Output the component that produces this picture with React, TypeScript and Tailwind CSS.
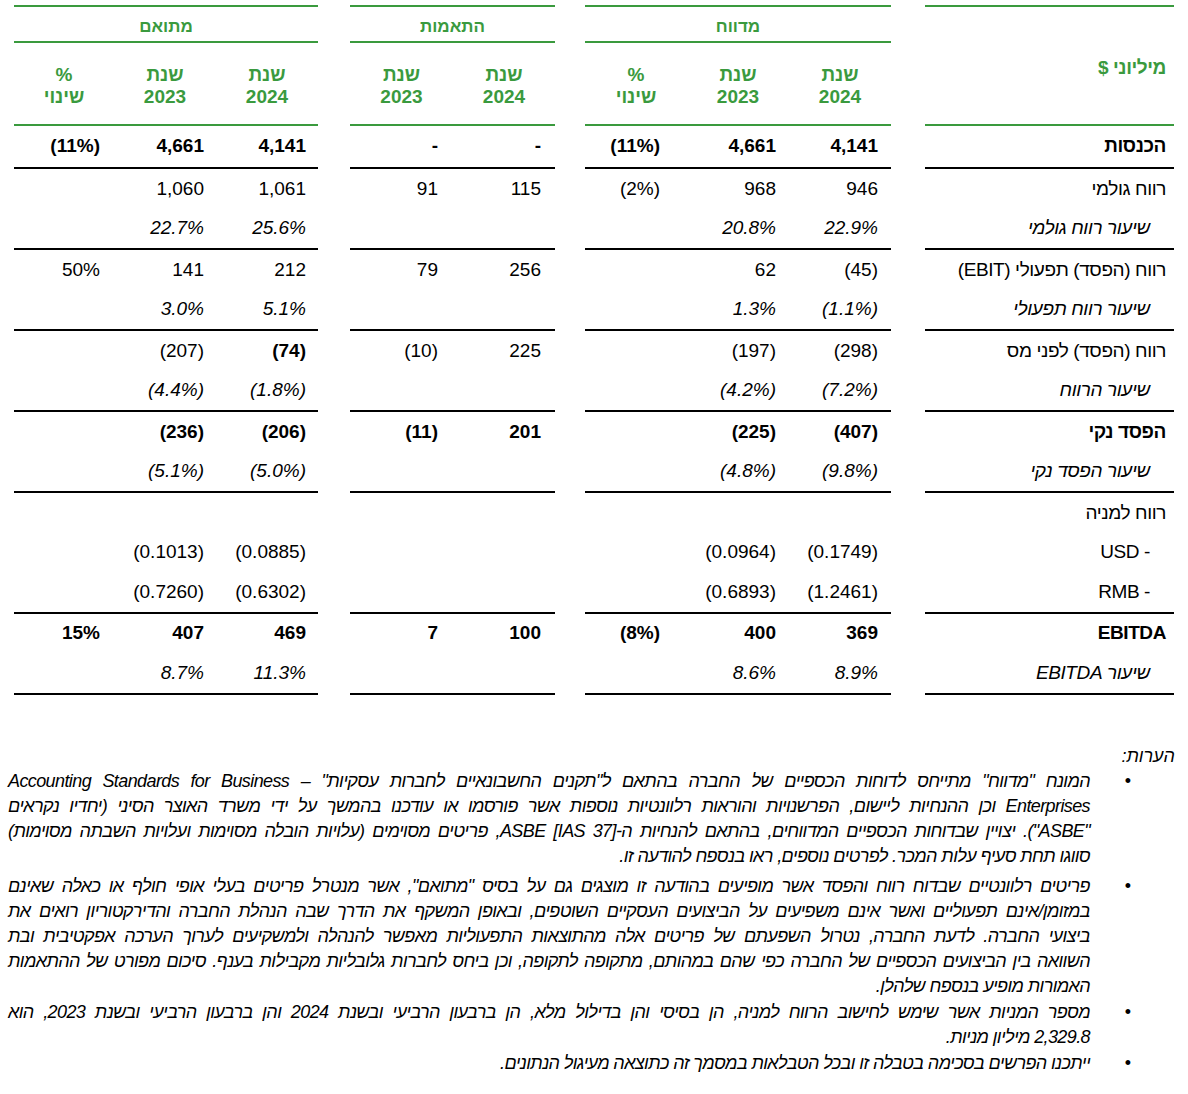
import React from 'react';

type Kind = 'bold' | 'normal' | 'italic';

interface Row {
  label: string;
  kind: Kind;
  indent?: boolean;
  rep: string[];
  adj: string[];
  adjd: string[];
  line?: boolean;
  first?: boolean;
}

const rows: Row[] = [
  { label: 'הכנסות', kind: 'bold', rep: ['4,141', '4,661', '(11%)'], adj: ['-', '-'], adjd: ['4,141', '4,661', '(11%)'], line: true, first: true },
  { label: 'רווח גולמי', kind: 'normal', rep: ['946', '968', '(2%)'], adj: ['115', '91'], adjd: ['1,061', '1,060', ''] },
  { label: 'שיעור רווח גולמי', kind: 'italic', indent: true, rep: ['22.9%', '20.8%', ''], adj: ['', ''], adjd: ['25.6%', '22.7%', ''], line: true },
  { label: 'רווח (הפסד) תפעולי (EBIT)', kind: 'normal', rep: ['(45)', '62', ''], adj: ['256', '79'], adjd: ['212', '141', '50%'] },
  { label: 'שיעור רווח תפעולי', kind: 'italic', indent: true, rep: ['(1.1%)', '1.3%', ''], adj: ['', ''], adjd: ['5.1%', '3.0%', ''], line: true },
  { label: 'רווח (הפסד) לפני מס', kind: 'normal', rep: ['(298)', '(197)', ''], adj: ['225', '(10)'], adjd: ['*(74)', '(207)', ''] },
  { label: 'שיעור הרווח', kind: 'italic', indent: true, rep: ['(7.2%)', '(4.2%)', ''], adj: ['', ''], adjd: ['(1.8%)', '(4.4%)', ''], line: true },
  { label: 'הפסד נקי', kind: 'bold', rep: ['(407)', '(225)', ''], adj: ['201', '(11)'], adjd: ['(206)', '(236)', ''] },
  { label: 'שיעור הפסד נקי', kind: 'italic', indent: true, rep: ['(9.8%)', '(4.8%)', ''], adj: ['', ''], adjd: ['(5.0%)', '(5.1%)', ''], line: true },
  { label: 'רווח למניה', kind: 'normal', rep: ['', '', ''], adj: ['', ''], adjd: ['', '', ''] },
  { label: '- USD', kind: 'normal', indent: true, rep: ['(0.1749)', '(0.0964)', ''], adj: ['', ''], adjd: ['(0.0885)', '(0.1013)', ''] },
  { label: '- RMB', kind: 'normal', indent: true, rep: ['(1.2461)', '(0.6893)', ''], adj: ['', ''], adjd: ['(0.6302)', '(0.7260)', ''], line: true },
  { label: 'EBITDA', kind: 'bold', rep: ['369', '400', '(8%)'], adj: ['100', '7'], adjd: ['469', '407', '15%'] },
  { label: 'שיעור EBITDA', kind: 'italic', indent: true, rep: ['8.9%', '8.6%', ''], adj: ['', ''], adjd: ['11.3%', '8.7%', ''], line: true },
];

function rowClass(r: Row) {
  if (r.first) return 'h-[43px] border-b-2 border-black';
  return r.line ? 'h-[41.5px] border-b-2 border-black' : 'h-[39.5px]';
}

function kindClass(k: Kind, forceBold = false) {
  if (k === 'bold' || forceBold) return 'font-bold';
  if (k === 'italic') return 'italic';
  return '';
}

interface Col {
  w: string;
  pr: string;
}

function Block({ title, cols, years, pick }: { title: string; cols: Col[]; years: string[]; pick: (r: Row) => string[] }) {
  return (
    <div className="flex flex-col border-t-2 border-[#3a9a3e]">
      <div className="h-[36px] border-b-2 border-[#3a9a3e] flex items-center justify-center pt-[5px] text-[17px] font-bold text-[#3a9a3e]">
        {title}
      </div>
      <div className="h-[83px] border-b-2 border-[#3a9a3e] flex">
        {years.map((y, i) => (
          <div key={i} className={`${cols[i].w} flex flex-col items-center justify-center pt-[4px] text-[19px] leading-[22px] font-bold text-[#3a9a3e]`}>
            {y === '%' ? (
              <>
                <span>%</span>
                <span>שינוי</span>
              </>
            ) : (
              <>
                <span>שנת</span>
                <span>{y}</span>
              </>
            )}
          </div>
        ))}
      </div>
      {rows.map((r, ri) => (
        <div key={ri} className={`flex ${rowClass(r)}`}>
          {pick(r).map((v, i) => {
            const b = v.startsWith('*');
            return (
              <div key={i} dir="ltr" className={`${cols[i].w} ${cols[i].pr} flex items-center justify-end ${kindClass(r.kind, b)}`}>
                {b ? v.slice(1) : v}
              </div>
            );
          })}
        </div>
      ))}
    </div>
  );
}

const notes: string[][] = [
  [
    'המונח "מדווח" מתייחס לדוחות הכספיים של החברה בהתאם ל"תקנים החשבונאיים לחברות עסקיות" – Accounting Standards for Business',
    'Enterprises וכן ההנחיות ליישום, הפרשנויות והוראות רלוונטיות נוספות אשר פורסמו או עודכנו בהמשך על ידי משרד האוצר הסיני (יחדיו נקראים',
    '"ASBE"). יצויין שבדוחות הכספיים המדווחים, בהתאם להנחיות ה-ASBE [IAS 37], פריטים מסוימים (עלויות הובלה מסוימות ועלויות השבתה מסוימות)',
    'סווגו תחת סעיף עלות המכר. לפרטים נוספים, ראו בנספח להודעה זו.',
  ],
  [
    'פריטים רלוונטיים שבדוח רווח והפסד אשר מופיעים בהודעה זו מוצגים גם על בסיס "מתואם", אשר מנטרל פריטים בעלי אופי חולף או כאלה שאינם',
    'במזומן/אינם תפעוליים ואשר אינם משפיעים על הביצועים העסקיים השוטפים, ובאופן המשקף את הדרך שבה הנהלת החברה והדירקטוריון רואים את',
    'ביצועי החברה. לדעת החברה, נטרול השפעתם של פריטים אלה מהתוצאות התפעוליות מאפשר להנהלה ולמשקיעים לערוך הערכה אפקטיבית ובת',
    'השוואה בין הביצועים הכספיים של החברה כפי שהם במהותם, מתקופה לתקופה, וכן ביחס לחברות גלובליות מקבילות בענף. סיכום מפורט של ההתאמות',
    'האמורות מופיע בנספח שלהלן.',
  ],
  [
    'מספר המניות אשר שימש לחישוב הרווח למניה, הן בסיסי והן בדילול מלא, הן ברבעון הרביעי ובשנת 2024 והן ברבעון הרביעי ובשנת 2023, הוא',
    '2,329.8 מיליון מניות.',
  ],
  ['ייתכנו הפרשים בסכימה בטבלה זו ובכל הטבלאות במסמך זה כתוצאה מעיגול הנתונים.'],
];

export default function App() {
  return (
    <div dir="rtl" className="w-[1188px] bg-white text-black font-['Liberation_Sans',Arial,sans-serif] text-[19px]">
      <div className="flex pt-[5px] pr-[14px] pl-[14px]">
        {/* label column */}
        <div className="w-[249px] flex flex-col border-t-2 border-[#3a9a3e] tracking-[-0.4px]">
          <div className="h-[119px] border-b-2 border-[#3a9a3e] flex items-center pr-2 pt-[5px] font-bold text-[#3a9a3e]">
            מיליוני $
          </div>
          {rows.map((r, i) => (
            <div key={i} className={`flex items-center ${rowClass(r)} ${r.indent ? 'pr-6' : 'pr-2'} ${kindClass(r.kind)}`}>
              {r.label}
            </div>
          ))}
        </div>
        <div className="w-[34px]" />
        <Block
          title="מדווח"
          years={['2024', '2023', '%']}
          cols={[
            { w: 'w-[102px]', pr: 'pr-[13px]' },
            { w: 'w-[102px]', pr: 'pr-[13px]' },
            { w: 'w-[102px]', pr: 'pr-[27px]' },
          ]}
          pick={(r) => r.rep}
        />
        <div className="w-[30px]" />
        <Block
          title="התאמות"
          years={['2024', '2023']}
          cols={[
            { w: 'w-[102px]', pr: 'pr-[14px]' },
            { w: 'w-[103px]', pr: 'pr-[15px]' },
          ]}
          pick={(r) => r.adj}
        />
        <div className="w-[32px]" />
        <Block
          title="מתואם"
          years={['2024', '2023', '%']}
          cols={[
            { w: 'w-[102px]', pr: 'pr-[12px]' },
            { w: 'w-[102px]', pr: 'pr-[12px]' },
            { w: 'w-[100px]', pr: 'pr-[14px]' },
          ]}
          pick={(r) => r.adjd}
        />
      </div>

      <div className="mt-[49px] pb-[20px] italic text-[18px] leading-[25px]">
        <div className="pr-[13px]">הערות:</div>
        <ul className="pr-[57px] pl-[8px]">
          {notes.map((lines, i) => (
            <li key={i} className={`flex ${i === 0 ? 'mb-[5px]' : 'mb-[1px]'}`}>
              <span className="w-[41px] shrink-0 not-italic">•</span>
              <div className="flex-1 min-w-0 tracking-[-0.6px] whitespace-nowrap">
                {lines.map((l, j) => (
                  <div key={j} className={j < lines.length - 1 ? 'text-justify [text-align-last:justify]' : ''}>
                    {l}
                  </div>
                ))}
              </div>
            </li>
          ))}
        </ul>
      </div>
    </div>
  );
}
